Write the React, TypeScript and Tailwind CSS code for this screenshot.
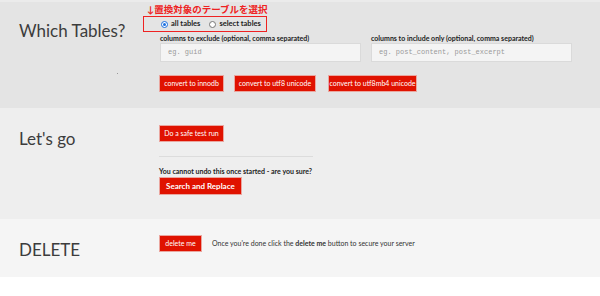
import React from "react";

const font = { fontFamily: "Lato, 'Noto Sans CJK JP', sans-serif" };

function RedButton({ children, className = "" }: { children: React.ReactNode; className?: string }) {
  return (
    <button
      className={`h-[17px] whitespace-nowrap border border-[#eaa69f] bg-[#e01200] px-0 text-[7px] leading-none text-white ${className}`}
    >
      {children}
    </button>
  );
}

function Radio({ checked, label }: { checked?: boolean; label: string }) {
  return (
    <label className="flex items-center gap-[3px]">
      <span
        className={`flex h-[7px] w-[7px] items-center justify-center rounded-full border bg-white ${
          checked ? "border-[#1a6fe0]" : "border-[#777]"
        }`}
      >
        {checked && <span className="h-[3px] w-[3px] rounded-full bg-[#1a6fe0]" />}
      </span>
      <span className="text-[7.5px] font-bold text-[#222]">{label}</span>
    </label>
  );
}

function Field({ label, placeholder }: { label: string; placeholder: string }) {
  return (
    <div className="flex w-[201px] flex-col">
      <span className="text-[7px] font-bold leading-[9px] text-[#222]">{label}</span>
      <div className="flex h-[19px] items-center border border-[#dadada] bg-[#f4f4f4] px-[7px]">
        <span className="font-['Liberation_Mono',monospace] text-[7px] text-[#9a9a9a]">{placeholder}</span>
      </div>
    </div>
  );
}

function Heading({ children }: { children: React.ReactNode }) {
  return <h2 className="w-[159px] shrink-0 pl-[19px] text-[17px] leading-[20px] text-[#3c3c3c]">{children}</h2>;
}

export default function App() {
  return (
    <div className="min-h-[296px] w-[600px] bg-white" style={font}>
      {/* which tables */}
      <section className="flex h-[108px] border-t-2 border-[#ebebeb] bg-[#e4e4e4]">
        <div className="w-[159px] shrink-0">
          <Heading>
            <span className="mt-[19px] block">Which Tables?</span>
          </Heading>
          <div className="ml-[117px] mt-[32px] h-[1px] w-[1px] bg-[#999]" />
        </div>
        <div className="flex flex-col">
          <div className="-ml-[12px] mt-[1px] h-[13px] text-[9.5px] font-bold leading-[13px] text-[#ee2222]">
            ↓置換対象のテーブルを選択
          </div>
          <div className="-ml-[16px] flex h-[16px] w-[124px] items-center gap-[9px] border-[1.5px] border-[#ee2222] pl-[17px]">
            <Radio checked label="all tables" />
            <Radio label="select tables" />
          </div>
          <div className="mt-[2px] flex gap-[10px] pl-[1px]">
            <Field label="columns to exclude (optional, comma separated)" placeholder="eg. guid" />
            <Field label="columns to include only (optional, comma separated)" placeholder="eg. post_content, post_excerpt" />
          </div>
          <div className="mt-[13px] flex gap-[10px]">
            <RedButton className="w-[65px]">convert to innodb</RedButton>
            <RedButton className="w-[82px]">convert to utf8 unicode</RedButton>
            <RedButton className="ml-[2px] w-[89px]">convert to utf8mb4 unicode</RedButton>
          </div>
        </div>
      </section>

      {/* let's go */}
      <section className="flex h-[111px] bg-[#eeeeee]">
        <Heading>
          <span className="mt-[21px] block">Let's go</span>
        </Heading>
        <div className="flex flex-col pt-[17px]">
          <RedButton className="w-[65px] self-start">Do a safe test run</RedButton>
          <div className="mt-[14px] h-[1px] w-[154px] bg-[#dcdcdc]" />
          <p className="mt-[10px] text-[7px] font-bold leading-[9px] text-[#222]">
            You cannot undo this once started - are you sure?
          </p>
          <button className="mt-[1px] h-[18px] self-start border border-[#eaa69f] bg-[#e01200] px-[6px] text-[8px] font-bold leading-none text-white">
            Search and Replace
          </button>
        </div>
      </section>

      {/* delete */}
      <section className="flex h-[58px] bg-[#f5f5f5]">
        <Heading>
          <span className="mt-[21px] block">DELETE</span>
        </Heading>
        <div className="flex items-start gap-[10px] pt-[16px]">
          <RedButton className="w-[43px]">delete me</RedButton>
          <p className="mt-[4px] text-[7px] leading-[9px] text-[#333]">
            Once you're done click the <b>delete me</b> button to secure your server
          </p>
        </div>
      </section>
    </div>
  );
}
